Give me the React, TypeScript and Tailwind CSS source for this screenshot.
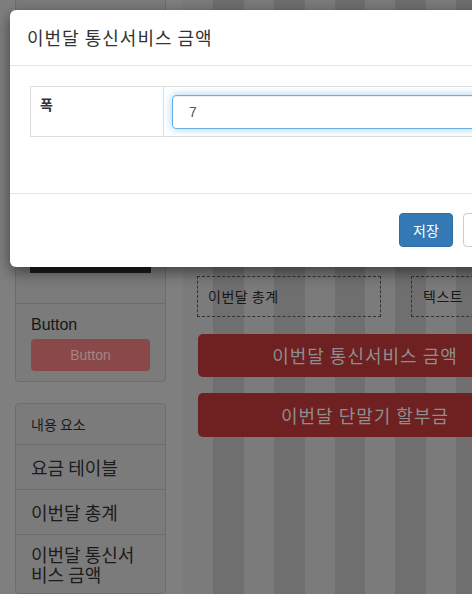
import React from "react";

const KR = { fontFamily: '"Noto Sans CJK KR", "Liberation Sans", sans-serif' };

export default function App() {
  return (
    <div
      className="relative w-[472px] h-[594px] overflow-hidden bg-[#7f7f7f]"
      style={KR}
    >
      {/* Background page (dimmed) */}
      <div className="flex h-full">
        {/* Sidebar */}
        <aside className="ml-[15px] w-[151px] shrink-0 flex flex-col gap-[21px]">
          <div className="border border-[#6c6c6c] rounded-[4px] bg-[#7b7b7b] -mt-[4px]">
            <div className="h-[306px] px-[14px] flex flex-col justify-end pb-[30px]">
              <div className="h-[40px] bg-[#1c1c1c]" />
            </div>
            <div className="border-t border-[#6c6c6c] px-[15px] pt-[10px] pb-[10px]">
              <div className="text-[16px] leading-[22px] text-[#161616] font-['Liberation_Sans',sans-serif]">
                Button
              </div>
              <div className="mt-[3px] h-[32px] rounded-[4px] bg-[#8a4848] flex items-center justify-center text-[14px] text-[#a38585] font-['Liberation_Sans',sans-serif]">
                Button
              </div>
            </div>
          </div>
          <div className="border border-[#6c6c6c] rounded-[4px] bg-[#7b7b7b] flex-1">
            <div className="h-[40px] px-[15px] flex items-center text-[14px] text-[#1c1c1c]">
              내용 요소
            </div>
            <div className="h-[45px] border-t border-[#6c6c6c] px-[15px] flex items-center text-[18px] text-[#1c1c1c]">
              요금 테이블
            </div>
            <div className="h-[45px] border-t border-[#6c6c6c] px-[15px] flex items-center text-[18px] text-[#1c1c1c]">
              이번달 총계
            </div>
            <div className="border-t border-[#6c6c6c] px-[15px] pt-[9px] text-[18px] leading-[20px] text-[#1c1c1c]">
              이번달 통신서 비스 금액
            </div>
          </div>
        </aside>

        {/* Striped column area */}
        <main className="ml-[17px] flex-1 bg-[repeating-linear-gradient(90deg,#7b7b7b_0px,#7b7b7b_30px,#6f6f6f_30px,#6f6f6f_60.75px)] pt-[276px] pl-[14px]">
          <div className="flex gap-[30px] w-[600px]">
            <div className="w-[184px] h-[41px] border border-dashed border-[#333333] flex items-center pl-[10px] text-[14px] text-[#161616] tracking-[0.5px]">
              이번달 총계
            </div>
            <div className="w-[184px] h-[41px] border border-dashed border-[#333333] flex items-center pl-[11px] text-[14px] text-[#161616] tracking-[0.5px]">
              텍스트
            </div>
          </div>
          <div className="mt-[17px] ml-[1px] w-[334px] h-[43px] rounded-[5px] bg-[#6f2020] flex items-center justify-center text-[18px] text-[#8b8f8f] tracking-[1px]">
            이번달 통신서비스 금액
          </div>
          <div className="mt-[16px] ml-[1px] w-[334px] h-[44px] rounded-[5px] bg-[#6f2020] flex items-center justify-center text-[18px] text-[#8b8f8f] tracking-[1px]">
            이번달 단말기 할부금
          </div>
        </main>
      </div>

      {/* Modal */}
      <div className="absolute left-[10px] top-[10px] w-[520px] bg-white rounded-[6px] shadow-[0_5px_15px_rgba(0,0,0,0.5)]">
        <div className="h-[56px] border-b border-[#e5e5e5] px-[17px] flex items-center text-[18px] text-[#333333] tracking-[1px]">
          이번달 통신서비스 금액
        </div>
        <div className="h-[127px] px-[20px] pt-[20px]">
          <div className="flex border border-[#dddddd] h-[51px]">
            <div className="w-[133px] shrink-0 border-r border-[#dddddd] px-[9px] pt-[7px] text-[14px] font-bold text-[#333333]">
              폭
            </div>
            <div className="flex-1 min-w-0 pt-[8px] pl-[8px]">
              <div className="h-[34px] w-[400px] rounded-[4px] border border-[#66afe9] shadow-[inset_0_1px_1px_rgba(0,0,0,0.075),0_0_8px_rgba(102,175,233,0.6)] flex items-center pl-[16px] text-[14px] text-[#555555] font-['Liberation_Sans',sans-serif]">
                7
              </div>
            </div>
          </div>
        </div>
        <div className="h-[74px] border-t border-[#e5e5e5] flex items-start pt-[19px] pl-[389px] gap-[10px]">
          <button className="h-[34px] w-[54px] shrink-0 rounded-[4px] bg-[#337ab7] border border-[#2e6da4] text-white text-[14px]">
            저장
          </button>
          <button className="h-[34px] w-[54px] shrink-0 rounded-[4px] bg-white border border-[#cccccc] text-[#333333] text-[14px]">
            닫기
          </button>
        </div>
      </div>
    </div>
  );
}
